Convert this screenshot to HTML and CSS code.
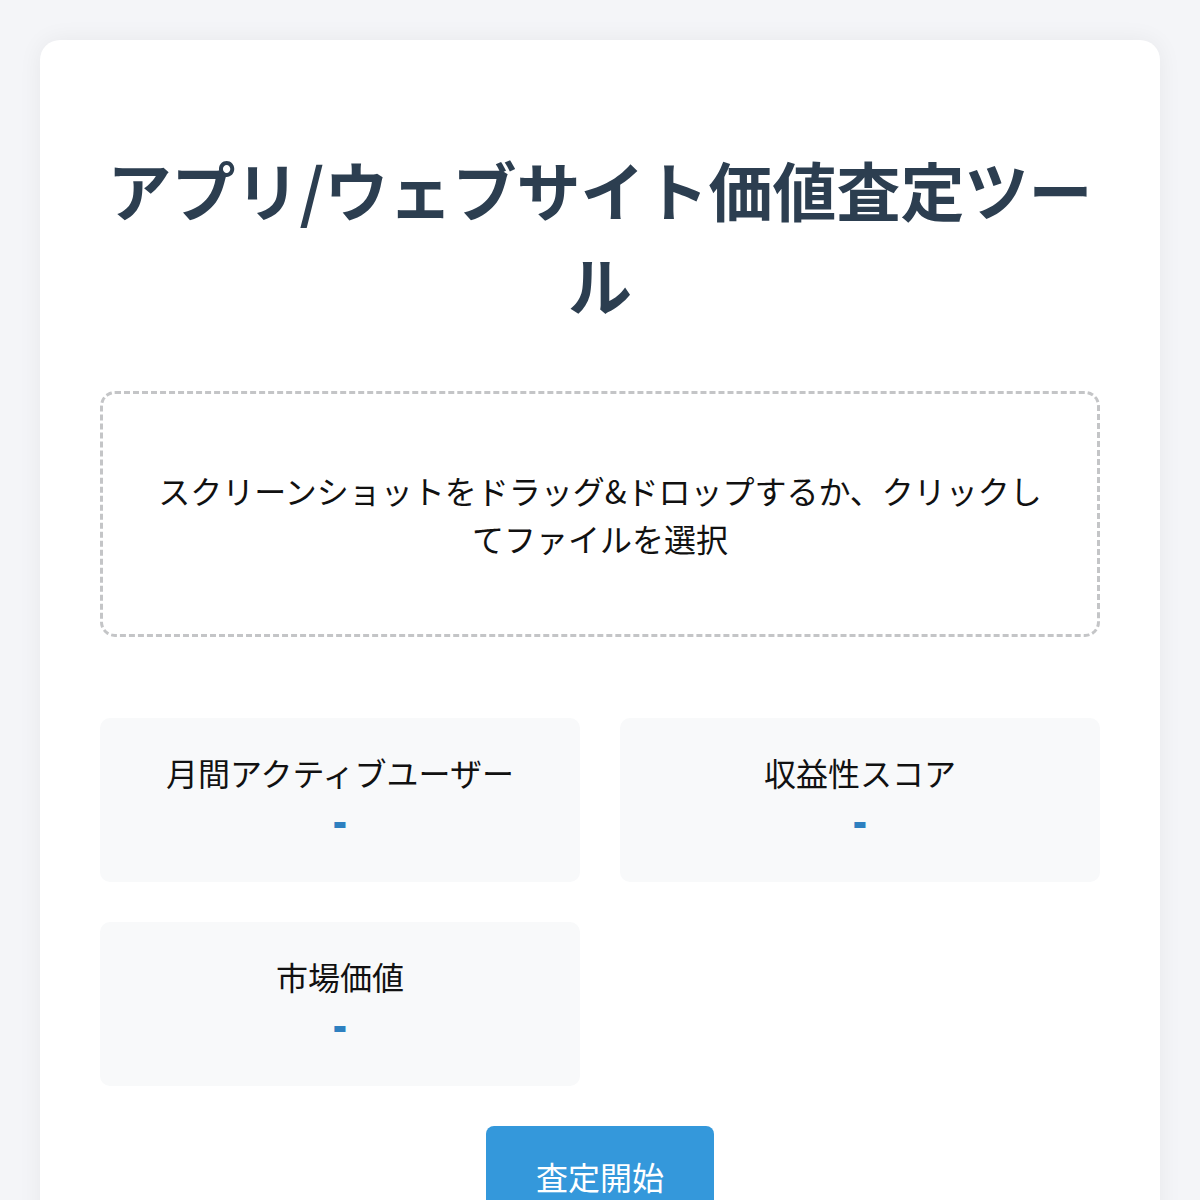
FILE: index.html
```html
<!DOCTYPE html>
<html lang="ja">
<head>
<meta charset="utf-8">
<title>アプリ/ウェブサイト価値査定ツール</title>
<link rel="stylesheet" href="styles.css">
</head>
<body>
<div class="container">
  <h1 class="title">アプリ/ウェブサイト価値査定ツール</h1>
  <div class="upload">
    <p class="upload-text">スクリーンショットをドラッグ&amp;ドロップするか、クリックしてファイルを選択</p>
  </div>
  <div class="metrics">
    <div class="metric">
      <div class="metric-label">月間アクティブユーザー</div>
      <div class="metric-value">-</div>
    </div>
    <div class="metric">
      <div class="metric-label">収益性スコア</div>
      <div class="metric-value">-</div>
    </div>
    <div class="metric">
      <div class="metric-label">市場価値</div>
      <div class="metric-value">-</div>
    </div>
  </div>
  <div class="actions">
    <button class="btn">査定開始</button>
  </div>
</div>
</body>
</html>
```
FILE: styles.css
```css
html, body {
  margin: 0;
  padding: 0;
}
body {
  background: #f4f5f8;
  font-family: "Noto Sans CJK JP", "Noto Sans", sans-serif;
  color: #111;
  padding: 40px;
}
.container {
  background: #fff;
  border-radius: 20px;
  box-shadow: 0 0 24px rgba(0, 0, 0, 0.06);
  padding: 60px;
  min-height: 1200px;
}
.title {
  font-size: 64px;
  font-weight: 700;
  color: #2c3e50;
  text-align: center;
  margin: 41px 0 60px;
  line-height: 95px;
}
.upload {
  border: 3px dashed #c4c5c7;
  border-radius: 15px;
  padding: 40px 50px;
  text-align: center;
}
.upload-text {
  font-size: 32px;
  line-height: 48px;
  margin: 32px 0;
}
.metrics {
  display: grid;
  grid-template-columns: 1fr 1fr;
  gap: 40px;
  margin-top: 81px;
}
.metric {
  background: #f8f9fa;
  border-radius: 10px;
  padding: 31px 20px 39px;
  text-align: center;
}
.metric-label {
  font-size: 32px;
  line-height: 46px;
}
.metric-value {
  margin-top: 2px;
  font-size: 32px;
  line-height: 46px;
  font-weight: 900;
  color: #2e80c0;
  -webkit-text-stroke: 2px #2e80c0;
}
.actions {
  text-align: center;
  margin-top: 40px;
}
.btn {
  font-family: inherit;
  font-size: 32px;
  line-height: 46px;
  color: #fff;
  background: #3498db;
  border: none;
  border-radius: 8px;
  padding: 27px 50px;
  cursor: pointer;
}
```
